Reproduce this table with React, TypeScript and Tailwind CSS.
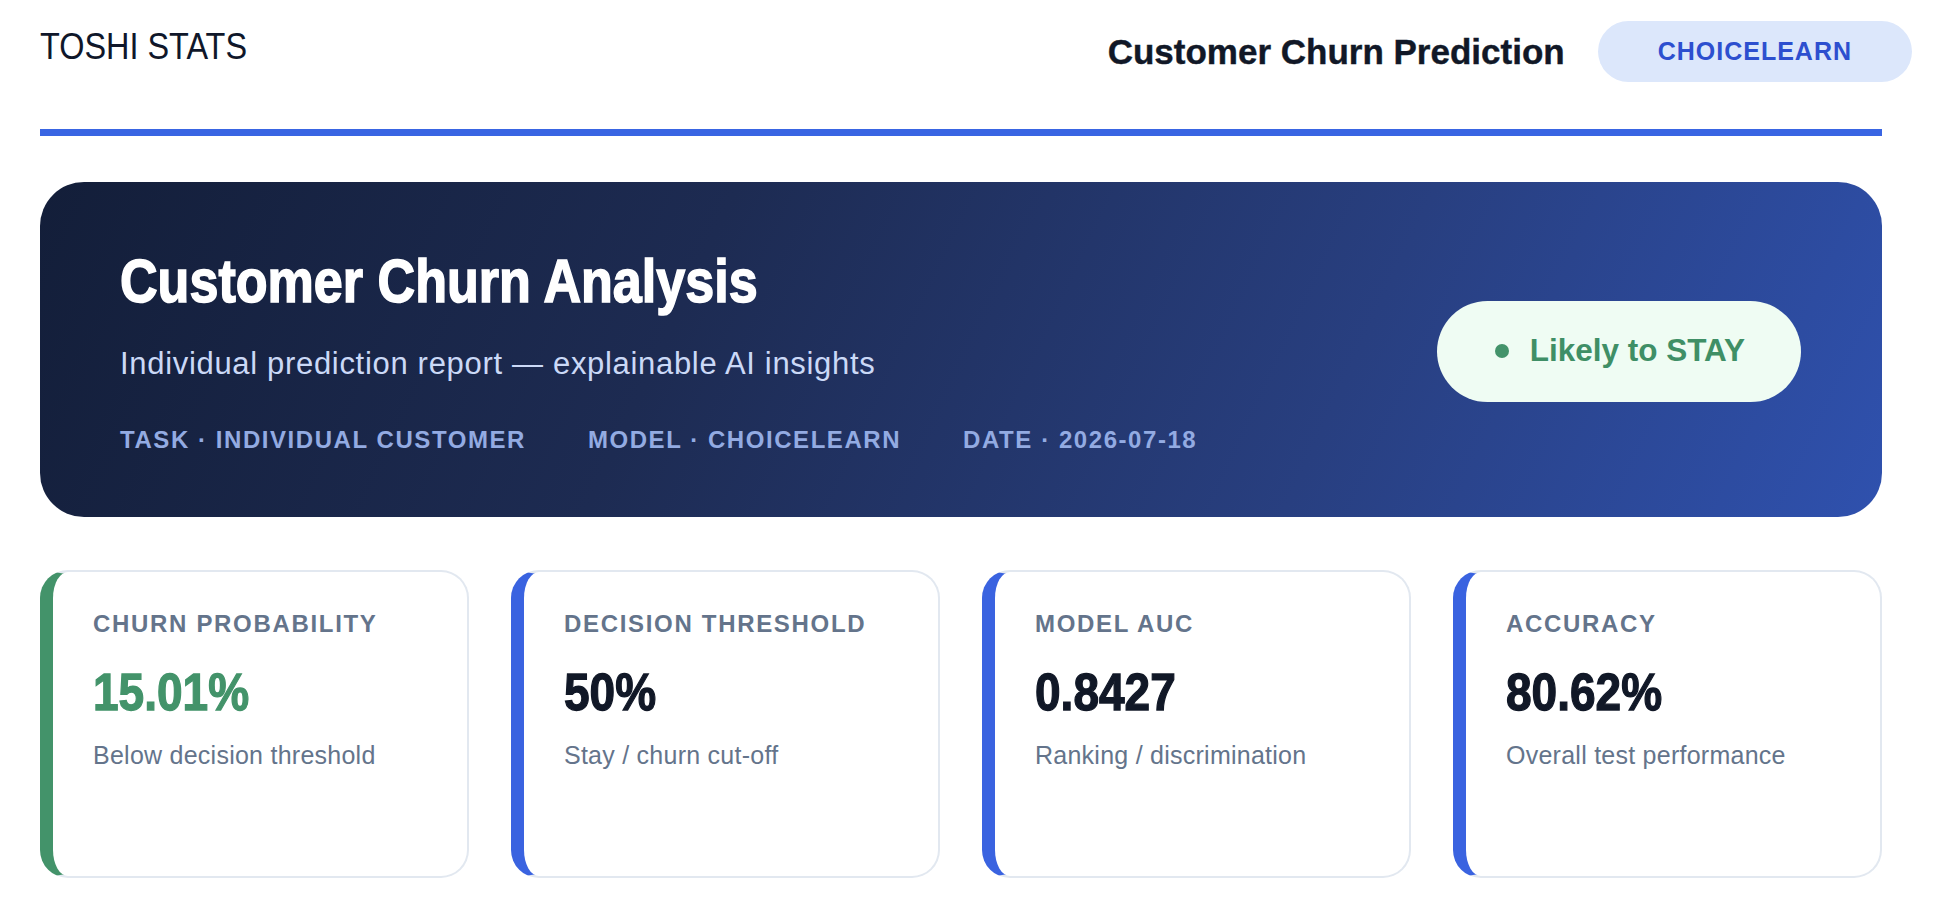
import React from "react";

type Card = {
  label: string;
  value: string;
  sub: string;
  accent: "green" | "blue";
};

const cards: Card[] = [
  { label: "CHURN PROBABILITY", value: "15.01%", sub: "Below decision threshold", accent: "green" },
  { label: "DECISION THRESHOLD", value: "50%", sub: "Stay / churn cut-off", accent: "blue" },
  { label: "MODEL AUC", value: "0.8427", sub: "Ranking / discrimination", accent: "blue" },
  { label: "ACCURACY", value: "80.62%", sub: "Overall test performance", accent: "blue" },
];

function MetricCard({ card }: { card: Card }) {
  const green = card.accent === "green";
  return (
    <div
      className={
        green
          ? "h-[308px] rounded-[28px] border-2 border-[#e2e8f0] border-l-[13px] border-l-[#43936a] bg-white pl-[40px] pt-[40px]"
          : "h-[308px] rounded-[28px] border-2 border-[#e2e8f0] border-l-[13px] border-l-[#3a63e0] bg-white pl-[40px] pt-[40px]"
      }
    >
      <div className="text-[24px] font-bold leading-none tracking-[0.07em] text-[#64748b]">{card.label}</div>
      <div
        className={
          green
            ? "mt-[30px] text-[52px] font-bold leading-none text-[#43936a] [-webkit-text-stroke:1.3px_#43936a]"
            : "mt-[30px] text-[52px] font-bold leading-none text-[#111827] [-webkit-text-stroke:1.3px_#111827]"
        }
      >
        <span className="inline-block origin-left scale-x-[0.885]">{card.value}</span>
      </div>
      <div className="mt-[25px] text-[25px] leading-none tracking-[0.01em] text-[#64748b]">{card.sub}</div>
    </div>
  );
}

export default function App() {
  return (
    <div className="min-h-[922px] bg-white pl-[40px] pr-[76px] font-['Liberation_Sans',Arial,sans-serif]">
      <header className="-mr-[30px] flex items-start justify-between pt-[21px]">
        <div className="mt-[8px] text-[36px] leading-none text-[#0f172a]">
          <span className="inline-block origin-left scale-x-[0.9]">TOSHI STATS</span>
        </div>
        <div className="flex items-center gap-[33px]">
          <h1 className="text-[35px] font-bold leading-none text-[#111827] [-webkit-text-stroke:0.4px_#111827]">
            Customer Churn Prediction
          </h1>
          <div className="flex h-[61px] items-center rounded-full bg-[#dce7fb] px-[60px] text-[25px] font-bold leading-none tracking-[0.04em] text-[#2d4fcf]">
            CHOICELEARN
          </div>
        </div>
      </header>

      <div className="mt-[47px] h-[7px] bg-[#3965e3]" />

      <section className="mt-[46px] flex items-start justify-between rounded-[44px] bg-[linear-gradient(115deg,#131e39_0%,#1d2b52_35%,#283f80_70%,#2f51ae_100%)] pb-[65px] pl-[80px] pr-[81px] pt-[68px]">
        <div className="flex flex-col">
          <h2 className="text-[62px] font-bold leading-none text-white [-webkit-text-stroke:1.6px_#ffffff]">
            <span className="inline-block origin-left scale-x-[0.84]">Customer Churn Analysis</span>
          </h2>
          <p className="mt-[36px] text-[31px] leading-none tracking-[0.022em] text-[#cbd9f7]">
            Individual prediction report — explainable AI insights
          </p>
          <div className="mt-[49px] flex gap-[62px] text-[24px] font-bold leading-none tracking-[0.065em] text-[#93abe2]">
            <span>TASK · INDIVIDUAL CUSTOMER</span>
            <span>MODEL · CHOICELEARN</span>
            <span>DATE · 2026-07-18</span>
          </div>
        </div>
        <div className="flex h-[101px] items-center gap-[21px] self-center rounded-full bg-[#effcf3] pl-[58px] pr-[56px]">
          <span className="h-[14px] w-[14px] rounded-full bg-[#43936a]" />
          <span className="text-[31.5px] font-bold leading-none text-[#3f8f66]">Likely to STAY</span>
        </div>
      </section>

      <div className="mt-[53px] grid grid-cols-4 gap-[42px]">
        {cards.map((c) => (
          <MetricCard key={c.label} card={c} />
        ))}
      </div>
    </div>
  );
}
